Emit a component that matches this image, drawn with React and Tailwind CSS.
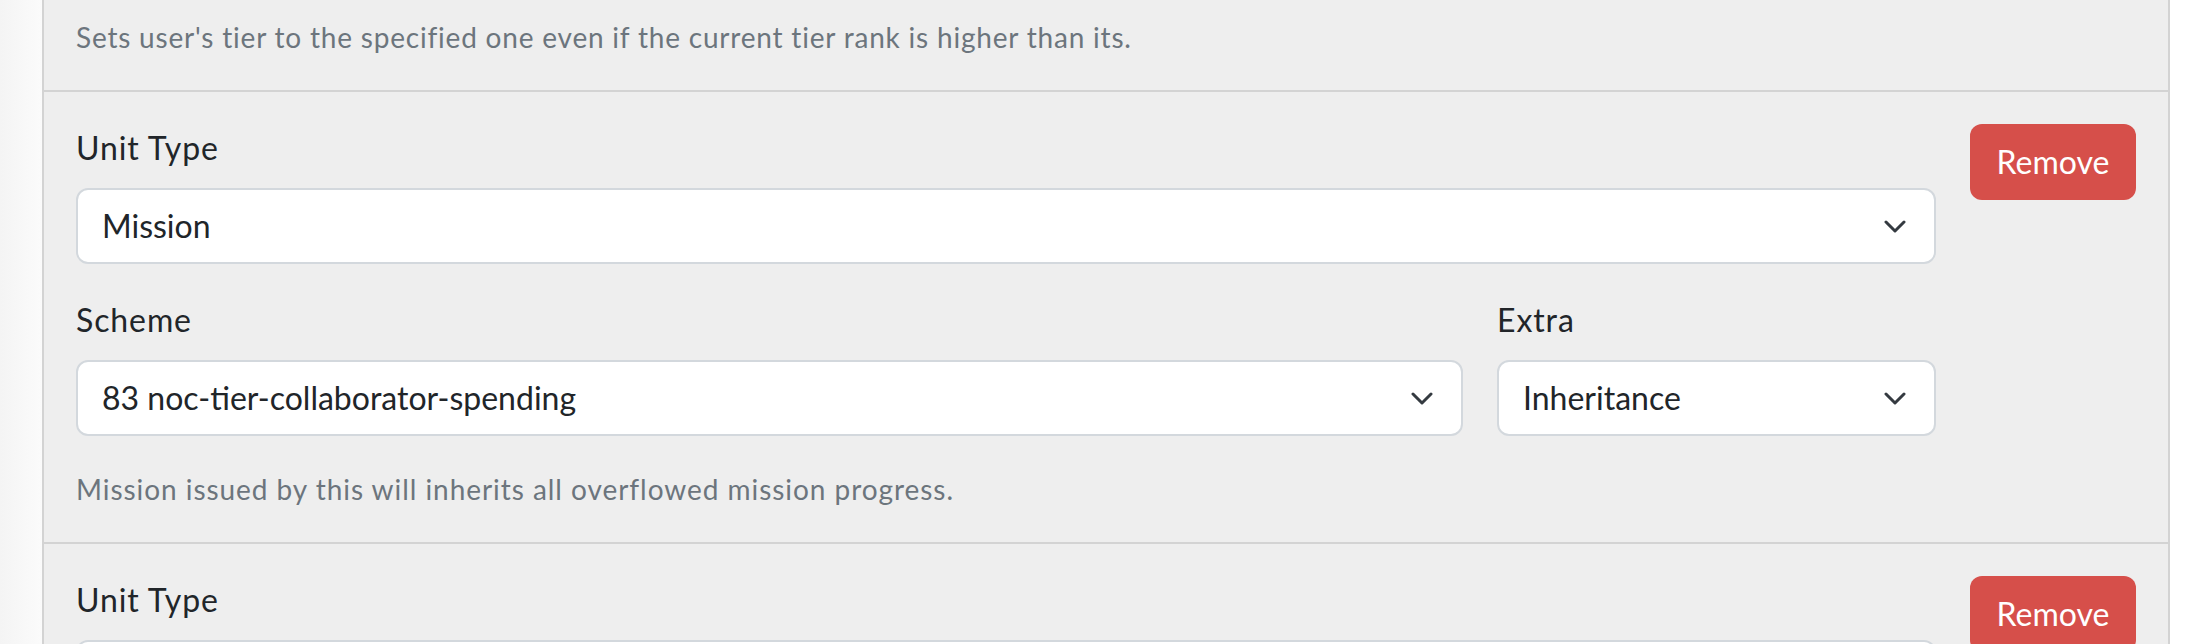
const ROWS = [
  {
    unitType: 'Mission',
    scheme: '83 noc-tier-collaborator-spending',
    extra: 'Inheritance',
    hint: 'Mission issued by this will inherits all overflowed mission progress.',
  },
  {
    unitType: 'Mission',
    scheme: '84 noc-tier-collaborator-spending',
    extra: 'Inheritance',
    hint: 'Mission issued by this will inherits all overflowed mission progress.',
  },
];

function Chevron() {
  return (
    <svg width="22" height="13" viewBox="0 0 22 13" fill="none" className="shrink-0">
      <path d="M2 2l9 9 9-9" stroke="#343a40" strokeWidth="3" strokeLinecap="round" strokeLinejoin="round" />
    </svg>
  );
}

function Select({ value }) {
  return (
    <div className="h-[76px] flex items-center justify-between bg-white border-2 border-[#d3d8dd] rounded-[12px] pl-[24px] pr-[28px] text-[32px] leading-[48px] text-[#212529]">
      <span className="truncate">{value}</span>
      <Chevron />
    </div>
  );
}

function Field({ label, value, className = '' }) {
  return (
    <div className={className}>
      <div className="text-[32px] leading-[48px] tracking-[0.9px] text-[#212529] mb-[16px]">{label}</div>
      <Select value={value} />
    </div>
  );
}

function UnitRow({ row }) {
  return (
    <div className="border-t-2 border-[#d3d3d3] p-[32px] flex gap-[34px]">
      <div className="flex-1 flex flex-col gap-[32px]">
        <Field label="Unit Type" value={row.unitType} />
        <div className="flex gap-[34px]">
          <Field label="Scheme" value={row.scheme} className="flex-1" />
          <Field label="Extra" value={row.extra} className="w-[439px]" />
        </div>
        <p className="text-[28px] leading-[42px] tracking-[0.95px] text-[#6c757d]">{row.hint}</p>
      </div>
      <button className="w-[166px] h-[76px] shrink-0 rounded-[12px] bg-[#d64f4a] text-white text-[32px] leading-[48px]">
        Remove
      </button>
    </div>
  );
}

export default function App() {
  return (
    <div className="h-[644px] overflow-hidden flex bg-white font-['Lato',sans-serif]">
      <div className="w-[42px] shrink-0 bg-gradient-to-r from-[#f4f4f4] to-[#fbfbfb]" />
      <div className="w-[2128px] shrink-0 border-x-2 border-[#d3d3d3] bg-[#eeeeee]">
        <div className="px-[32px] pt-[16px] pb-[32px]">
          <p className="text-[28px] leading-[42px] tracking-[0.8px] text-[#6c757d]">
            Sets user's tier to the specified one even if the current tier rank is higher than its.
          </p>
        </div>
        {ROWS.map((row, i) => (
          <UnitRow key={i} row={row} />
        ))}
      </div>
    </div>
  );
}
